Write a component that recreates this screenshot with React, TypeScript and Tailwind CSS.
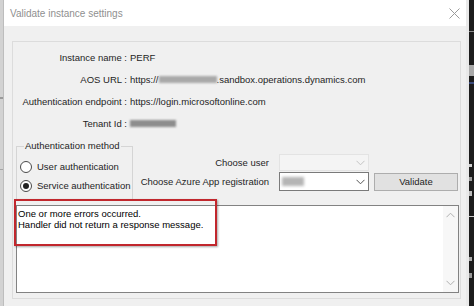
import React from "react";

const Chevron = ({ dir = "down", color = "#8a8a8a" }: { dir?: "down" | "up"; color?: string }) => (
  <svg width="9" height="6" viewBox="0 0 9 6">
    <polyline
      points={dir === "down" ? "0.5,0.8 4.5,4.8 8.5,0.8" : "0.5,5.2 4.5,1.2 8.5,5.2"}
      fill="none"
      stroke={color}
      strokeWidth="1"
    />
  </svg>
);

const Blur = ({ w, dark = false }: { w: number; dark?: boolean }) => (
  <span
    className={`inline-block h-[7px] align-middle blur-[1.2px] ${dark ? "bg-[#8d8d8d]" : "bg-[#a9a9a9]"}`}
    style={{ width: w }}
  />
);

const Row = ({ label, children }: { label: string; children: React.ReactNode }) => (
  <div className="flex h-[22px] items-center">
    <div className="w-[114px] text-right whitespace-nowrap">{label} :</div>
    <div className="ml-[3px] whitespace-nowrap">{children}</div>
  </div>
);

const Radio = ({ checked, label }: { checked?: boolean; label: string }) => (
  <div className="flex h-[19px] items-center">
    <span className="ml-[3px] flex h-[12px] w-[12px] items-center justify-center rounded-full border border-[#4a4a4a] bg-white">
      {checked && <span className="h-[6px] w-[6px] rounded-full bg-[#222]" />}
    </span>
    <span className="ml-[5px] whitespace-nowrap">{label}</span>
  </div>
);

export default function App() {
  return (
    <div
      className="flex h-[306px] w-[474px] overflow-hidden bg-[#1c1c1c] text-[9.5px] leading-[11px] text-[#1e1e1e]"
      style={{ fontFamily: '"Liberation Sans", Arial, sans-serif' }}
    >
      {/* left background strip */}
      <div className="flex w-[3px] flex-col bg-[#d2d2d2]">
        <div className="mt-[97px] h-[2px] bg-[#9a9a9a]" />
        <div className="mt-[70px] h-[1px] bg-[#a5a5a5]" />
      </div>

      {/* window */}
      <div className="flex w-[463px] flex-col border-l border-[#bdbdbd] bg-[#f0f0f0]">
        <div className="flex h-[26px] items-center justify-between bg-white pl-[6px] pr-[5px]">
          <span className="text-[10px] text-[#8f8f8f]">Validate instance settings</span>
          <svg width="11" height="11" viewBox="0 0 11 11" className="mr-[1px]">
            <line x1="0.5" y1="0.5" x2="10.5" y2="10.5" stroke="#9a9a9a" strokeWidth="1" />
            <line x1="10.5" y1="0.5" x2="0.5" y2="10.5" stroke="#9a9a9a" strokeWidth="1" />
          </svg>
        </div>

        <div className="pl-[8px] pt-[15px]">
          <div className="flex h-[258px] w-[449px] flex-col border border-[#dcdcdc] pt-[4px]">
            <Row label="Instance name">PERF</Row>
            <Row label="AOS URL">
              https://<Blur w={58} />.sandbox.operations.dynamics.com
            </Row>
            <Row label="Authentication endpoint">https://login.microsoftonline.com</Row>
            <Row label="Tenant Id">
              <Blur w={46} dark />
            </Row>

            <div className="flex">
              <fieldset className="ml-[3px] mt-[6px] h-[60px] w-[117px] border border-b-0 border-[#d5d5d5] pt-[5px]">
                <legend className="ml-[7px] px-[1px] leading-[12px]">Authentication method</legend>
                <Radio label="User authentication" />
                <Radio checked label="Service authentication" />
              </fieldset>

              <div className="mt-[20px] flex flex-col gap-[1px]">
                <div className="flex h-[17px] items-center">
                  <div className="w-[136px] text-right whitespace-nowrap">Choose user</div>
                  <div className="ml-[10px] flex h-[17px] w-[90px] items-center justify-end border border-[#e3e3e3] bg-[#f4f4f4] pr-[3px]">
                    <Chevron color="#c4c4c4" />
                  </div>
                </div>
                <div className="flex h-[19px] items-center">
                  <div className="w-[136px] text-right whitespace-nowrap">Choose Azure App registration</div>
                  <div className="ml-[10px] flex h-[19px] w-[90px] items-center justify-between border border-[#7a7a7a] bg-white pl-[2px] pr-[3px]">
                    <span className="h-[9px] w-[22px] bg-[#b5b5b5] blur-[1.5px]" />
                    <Chevron color="#555" />
                  </div>
                  <button className="ml-[5px] flex h-[18px] w-[84px] items-center justify-center border border-[#adadad] bg-[#e1e1e1] text-[#1e1e1e]">
                    Validate
                  </button>
                </div>
              </div>
            </div>

            <div className="relative ml-[3px] mt-[5px] flex h-[88px] w-[443px] border border-[#828282] bg-white">
              <div className="flex-1 pl-[1px] pt-[2px] text-black">
                <div>One or more errors occurred.</div>
                <div>Handler did not return a response message.</div>
              </div>
              <div className="flex w-[15px] flex-col items-center justify-between bg-[#f7f7f7] py-[6px]">
                <Chevron dir="up" color="#b0b0b0" />
                <Chevron color="#b0b0b0" />
              </div>
              <div className="absolute left-[-3px] top-[-7px] h-[47px] w-[203px] border-2 border-[#c1272d] shadow-[1px_1px_2px_rgba(0,0,0,0.35)]" />
            </div>
          </div>
        </div>
      </div>

      {/* right background strip */}
      <div className="w-[3px] bg-[#e9e9e9]" />
      <div className="flex w-[5px] flex-col bg-[#1c1c1c]">
        <div className="mt-[31px] h-[1px] bg-[#8a8a8a]" />
        <div className="mt-[33px] h-[11px] bg-[#a8a8a8]" />
        <div className="mt-[6px] h-[2px] bg-[#3b4a7a]" />
        <div className="mt-[80px] h-[3px] w-[3px] bg-[#cfcfcf]" />
        <div className="mt-[10px] h-[4px] w-[3px] bg-[#9a9a9a]" />
        <div className="mt-[10px] h-[5px] w-[3px] bg-[#bbbbbb]" />
        <div className="mt-[20px] h-[1px] bg-[#cccccc]" />
        <div className="mt-[40px] h-[4px] w-[3px] bg-[#aaaaaa]" />
        <div className="mt-[12px] h-[5px] w-[3px] bg-[#999999]" />
      </div>
    </div>
  );
}
